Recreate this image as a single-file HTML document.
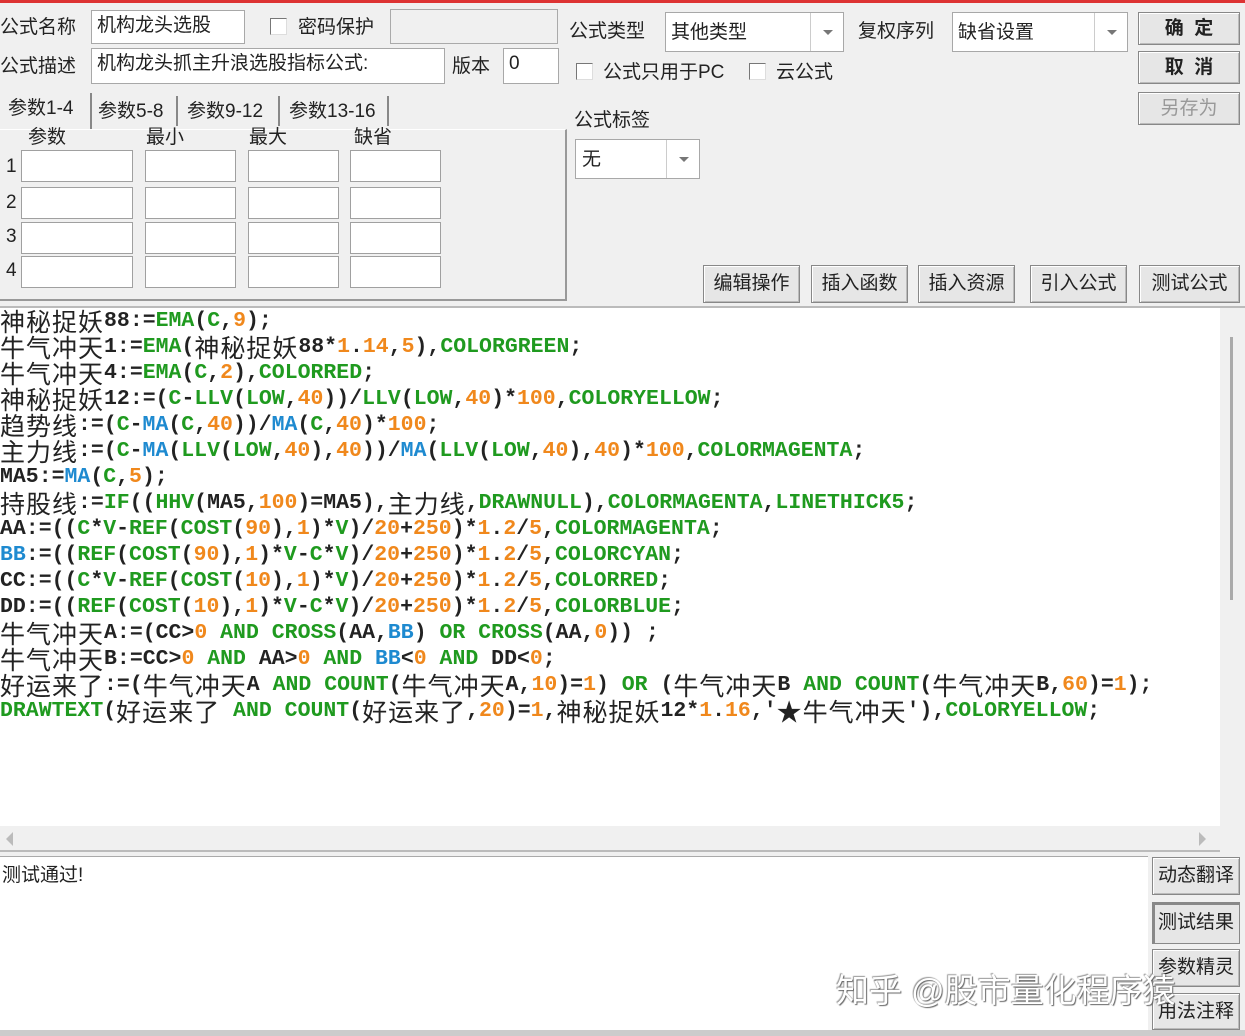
<!DOCTYPE html>
<html><head><meta charset="utf-8"><style>
*{box-sizing:border-box;margin:0;padding:0}
body{width:1245px;height:1036px;background:#f0f0f0;position:relative;overflow:hidden;font-family:"Liberation Sans","Noto Sans CJK SC",sans-serif;color:#222}
.a{position:absolute}
.t{font-size:19px;line-height:24px;white-space:nowrap}
.in{position:absolute;background:#fff;border:1px solid #a8a8a8;font-size:19px;line-height:30px;padding-left:5px;white-space:nowrap}
.cb{position:absolute;width:17px;height:17px;background:#fff;border:1px solid #777;border-right-color:#ddd;border-bottom-color:#ddd}
.btn{position:absolute;background:#e6e6e6;border:1px solid #888;box-shadow:inset 1px 1px 0 #fff,inset -1px -1px 0 #bbb;font-size:19px;text-align:center;white-space:nowrap}
.dd{position:absolute;background:#fff;border:1px solid #a8a8a8}
.dd .ar{position:absolute;right:0;top:0;bottom:0;width:33px;border-left:1px solid #ccc}
.dd .ar:after{content:"";position:absolute;left:12px;top:17px;border:5px solid transparent;border-top:5px solid #777}
.pc{position:absolute;background:#fff;border:1px solid #a0a0a0;width:110px;height:32px}
#code{position:absolute;left:0;top:308px;width:1220px;height:518px;background:#fff;font-family:"Liberation Mono",monospace;font-weight:bold;font-size:21.5px}
#code div{height:26px;line-height:26px;white-space:pre;overflow:visible}
.z{font-family:"Noto Sans CJK SC",sans-serif;font-weight:normal;font-size:25px;line-height:26px;height:26px;display:inline-block;vertical-align:top;letter-spacing:1px}
.g{color:#1f9a1f}.o{color:#f0881c}.b{color:#1e8ad0}
</style></head><body>
<div class="a" style="left:0;top:0;width:1245px;height:3px;background:#d33"></div>

<div class="a t" style="left:0;top:16px">公式名称</div>
<div class="in" style="left:91px;top:10px;width:154px;height:34px">机构龙头选股</div>
<div class="cb" style="left:270px;top:18px"></div>
<div class="a t" style="left:298px;top:16px">密码保护</div>
<div class="a" style="left:390px;top:9px;width:168px;height:35px;background:#f0f0f0;border:1px solid #aaa"></div>
<div class="a t" style="left:0;top:55px">公式描述</div>
<div class="in" style="left:91px;top:48px;width:354px;height:36px">机构龙头抓主升浪选股指标公式:</div>
<div class="a t" style="left:452px;top:55px">版本</div>
<div class="in" style="left:503px;top:48px;width:56px;height:36px">0</div>

<div class="a t" style="left:8px;top:97px">参数1-4</div>
<div class="a" style="left:90px;top:93px;width:2px;height:36px;background:#888"></div>
<div class="a t" style="left:98px;top:100px">参数5-8</div>
<div class="a" style="left:176px;top:96px;width:2px;height:30px;background:#888"></div>
<div class="a t" style="left:187px;top:100px">参数9-12</div>
<div class="a" style="left:278px;top:96px;width:2px;height:30px;background:#888"></div>
<div class="a t" style="left:289px;top:100px">参数13-16</div>
<div class="a" style="left:387px;top:96px;width:2px;height:30px;background:#888"></div>
<div class="a" style="left:0;top:129px;width:567px;height:172px;border-right:2px solid #999;border-bottom:2px solid #999;border-top:1px solid #fff"></div>
<div class="a t" style="left:28px;top:126px">参数</div>
<div class="a t" style="left:146px;top:126px">最小</div>
<div class="a t" style="left:249px;top:126px">最大</div>
<div class="a t" style="left:354px;top:126px">缺省</div>
<div class="a t" style="left:6px;top:155px">1</div><div class="a t" style="left:6px;top:191px">2</div><div class="a t" style="left:6px;top:225px">3</div><div class="a t" style="left:6px;top:259px">4</div>
<div class="pc" style="left:21px;top:150px;width:112px"></div><div class="pc" style="left:145px;top:150px;width:91px"></div><div class="pc" style="left:248px;top:150px;width:91px"></div><div class="pc" style="left:350px;top:150px;width:91px"></div>
<div class="pc" style="left:21px;top:187px;width:112px"></div><div class="pc" style="left:145px;top:187px;width:91px"></div><div class="pc" style="left:248px;top:187px;width:91px"></div><div class="pc" style="left:350px;top:187px;width:91px"></div>
<div class="pc" style="left:21px;top:222px;width:112px"></div><div class="pc" style="left:145px;top:222px;width:91px"></div><div class="pc" style="left:248px;top:222px;width:91px"></div><div class="pc" style="left:350px;top:222px;width:91px"></div>
<div class="pc" style="left:21px;top:256px;width:112px"></div><div class="pc" style="left:145px;top:256px;width:91px"></div><div class="pc" style="left:248px;top:256px;width:91px"></div><div class="pc" style="left:350px;top:256px;width:91px"></div>

<div class="a t" style="left:569px;top:20px">公式类型</div>
<div class="dd" style="left:665px;top:12px;width:179px;height:40px"><span class="a t" style="left:5px;top:8px">其他类型</span><div class="ar"></div></div>
<div class="a t" style="left:858px;top:20px">复权序列</div>
<div class="dd" style="left:952px;top:12px;width:176px;height:40px"><span class="a t" style="left:5px;top:8px">缺省设置</span><div class="ar"></div></div>
<div class="cb" style="left:576px;top:63px"></div>
<div class="a t" style="left:603px;top:61px">公式只用于PC</div>
<div class="cb" style="left:749px;top:63px"></div>
<div class="a t" style="left:776px;top:61px">云公式</div>
<div class="a t" style="left:574px;top:109px">公式标签</div>
<div class="dd" style="left:575px;top:139px;width:125px;height:40px"><span class="a t" style="left:6px;top:8px">无</span><div class="ar"></div></div>

<div class="btn" style="left:1138px;top:12px;width:102px;height:33px;line-height:31px;font-weight:bold">确&nbsp;&nbsp;定</div>
<div class="btn" style="left:1138px;top:51px;width:102px;height:33px;line-height:31px;font-weight:bold">取&nbsp;&nbsp;消</div>
<div class="btn" style="left:1138px;top:92px;width:102px;height:33px;line-height:31px;color:#999">另存为</div>

<div class="btn" style="left:703px;top:265px;width:97px;height:38px;line-height:36px">编辑操作</div>
<div class="btn" style="left:811px;top:265px;width:97px;height:38px;line-height:36px">插入函数</div>
<div class="btn" style="left:918px;top:265px;width:97px;height:38px;line-height:36px">插入资源</div>
<div class="btn" style="left:1030px;top:265px;width:97px;height:38px;line-height:36px">引入公式</div>
<div class="btn" style="left:1139px;top:265px;width:101px;height:38px;line-height:36px">测试公式</div>
<div class="a" style="left:0;top:306px;width:1245px;height:2px;background:#bbb"></div>

<div id="code">
<div><span class="z">神秘捉妖</span>88:=<span class="g">EMA</span>(<span class="g">C</span>,<span class="o">9</span>);</div>
<div><span class="z">牛气冲天</span>1:=<span class="g">EMA</span>(<span class="z">神秘捉妖</span>88*<span class="o">1</span>.<span class="o">14</span>,<span class="o">5</span>),<span class="g">COLORGREEN</span>;</div>
<div><span class="z">牛气冲天</span>4:=<span class="g">EMA</span>(<span class="g">C</span>,<span class="o">2</span>),<span class="g">COLORRED</span>;</div>
<div><span class="z">神秘捉妖</span>12:=(<span class="g">C</span>-<span class="g">LLV</span>(<span class="g">LOW</span>,<span class="o">40</span>))/<span class="g">LLV</span>(<span class="g">LOW</span>,<span class="o">40</span>)*<span class="o">100</span>,<span class="g">COLORYELLOW</span>;</div>
<div><span class="z">趋势线</span>:=(<span class="g">C</span>-<span class="b">MA</span>(<span class="g">C</span>,<span class="o">40</span>))/<span class="b">MA</span>(<span class="g">C</span>,<span class="o">40</span>)*<span class="o">100</span>;</div>
<div><span class="z">主力线</span>:=(<span class="g">C</span>-<span class="b">MA</span>(<span class="g">LLV</span>(<span class="g">LOW</span>,<span class="o">40</span>),<span class="o">40</span>))/<span class="b">MA</span>(<span class="g">LLV</span>(<span class="g">LOW</span>,<span class="o">40</span>),<span class="o">40</span>)*<span class="o">100</span>,<span class="g">COLORMAGENTA</span>;</div>
<div>MA5:=<span class="b">MA</span>(<span class="g">C</span>,<span class="o">5</span>);</div>
<div><span class="z">持股线</span>:=<span class="g">IF</span>((<span class="g">HHV</span>(MA5,<span class="o">100</span>)=MA5),<span class="z">主力线</span>,<span class="g">DRAWNULL</span>),<span class="g">COLORMAGENTA</span>,<span class="g">LINETHICK5</span>;</div>
<div>AA:=((<span class="g">C</span>*<span class="g">V</span>-<span class="g">REF</span>(<span class="g">COST</span>(<span class="o">90</span>),<span class="o">1</span>)*<span class="g">V</span>)/<span class="o">20</span>+<span class="o">250</span>)*<span class="o">1</span>.<span class="o">2</span>/<span class="o">5</span>,<span class="g">COLORMAGENTA</span>;</div>
<div><span class="b">BB</span>:=((<span class="g">REF</span>(<span class="g">COST</span>(<span class="o">90</span>),<span class="o">1</span>)*<span class="g">V</span>-<span class="g">C</span>*<span class="g">V</span>)/<span class="o">20</span>+<span class="o">250</span>)*<span class="o">1</span>.<span class="o">2</span>/<span class="o">5</span>,<span class="g">COLORCYAN</span>;</div>
<div>CC:=((<span class="g">C</span>*<span class="g">V</span>-<span class="g">REF</span>(<span class="g">COST</span>(<span class="o">10</span>),<span class="o">1</span>)*<span class="g">V</span>)/<span class="o">20</span>+<span class="o">250</span>)*<span class="o">1</span>.<span class="o">2</span>/<span class="o">5</span>,<span class="g">COLORRED</span>;</div>
<div>DD:=((<span class="g">REF</span>(<span class="g">COST</span>(<span class="o">10</span>),<span class="o">1</span>)*<span class="g">V</span>-<span class="g">C</span>*<span class="g">V</span>)/<span class="o">20</span>+<span class="o">250</span>)*<span class="o">1</span>.<span class="o">2</span>/<span class="o">5</span>,<span class="g">COLORBLUE</span>;</div>
<div><span class="z">牛气冲天</span>A:=(CC&gt;<span class="o">0</span> <span class="g">AND</span> <span class="g">CROSS</span>(AA,<span class="b">BB</span>) <span class="g">OR</span> <span class="g">CROSS</span>(AA,<span class="o">0</span>)) ;</div>
<div><span class="z">牛气冲天</span>B:=CC&gt;<span class="o">0</span> <span class="g">AND</span> AA&gt;<span class="o">0</span> <span class="g">AND</span> <span class="b">BB</span>&lt;<span class="o">0</span> <span class="g">AND</span> DD&lt;<span class="o">0</span>;</div>
<div><span class="z">好运来了</span>:=(<span class="z">牛气冲天</span>A <span class="g">AND</span> <span class="g">COUNT</span>(<span class="z">牛气冲天</span>A,<span class="o">10</span>)=<span class="o">1</span>) <span class="g">OR</span> (<span class="z">牛气冲天</span>B <span class="g">AND</span> <span class="g">COUNT</span>(<span class="z">牛气冲天</span>B,<span class="o">60</span>)=<span class="o">1</span>);</div>
<div><span class="g">DRAWTEXT</span>(<span class="z">好运来了</span> <span class="g">AND</span> <span class="g">COUNT</span>(<span class="z">好运来了</span>,<span class="o">20</span>)=<span class="o">1</span>,<span class="z">神秘捉妖</span>12*<span class="o">1</span>.<span class="o">16</span>,'<span class="z">★牛气冲天</span>'),<span class="g">COLORYELLOW</span>;</div>
</div>

<div class="a" style="left:1220px;top:308px;width:25px;height:518px;background:#f0f0f0"></div>
<div class="a" style="left:1230px;top:337px;width:3px;height:263px;background:#aaa"></div>
<div class="a" style="left:0;top:826px;width:1220px;height:26px;background:#f0f0f0;border-bottom:2px solid #bbb"></div>
<div class="a" style="left:6px;top:832px;border:7px solid transparent;border-right:7px solid #bbb;border-left:0"></div>
<div class="a" style="left:1199px;top:832px;border:7px solid transparent;border-left:7px solid #bbb;border-right:0"></div>

<div class="a" style="left:0;top:856px;width:1148px;height:174px;background:#fff;border-top:1px solid #aaa"></div>
<div class="a t" style="left:2px;top:864px">测试通过!</div>
<div class="btn" style="left:1152px;top:857px;width:88px;height:38px;line-height:36px">动态翻译</div>
<div class="btn" style="left:1152px;top:902px;width:88px;height:42px;line-height:40px;box-shadow:inset 2px 2px 0 #888">测试结果</div>
<div class="btn" style="left:1152px;top:949px;width:88px;height:38px;line-height:36px">参数精灵</div>
<div class="btn" style="left:1152px;top:993px;width:88px;height:37px;line-height:35px">用法注释</div>
<div class="a" style="left:0;top:1030px;width:1245px;height:6px;background:#ccc"></div>
<div class="a" style="left:836px;top:964px;font-size:33px;color:#fff;white-space:nowrap;text-shadow:1px 1px 1px #666,-1px -1px 1px #999">知乎 @股市量化程序猿</div>
</body></html>
